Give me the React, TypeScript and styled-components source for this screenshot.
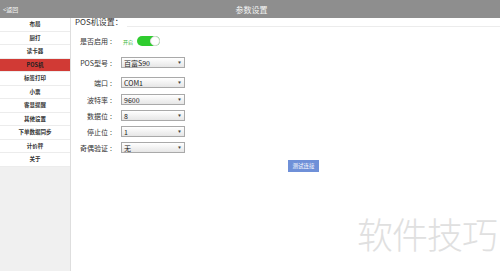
import styled, { createGlobalStyle } from 'styled-components';

const GlobalStyle = createGlobalStyle`
  html, body {
    margin: 0;
    padding: 0;
    background: #fff;
  }
  body {
    font-family: "Noto Sans CJK SC", "Liberation Sans", sans-serif;
  }
`;

const Page = styled.div`
  width: 500px;
  height: 271px;
  display: flex;
  flex-direction: column;
  position: relative;
  overflow: hidden;
`;

const TopBar = styled.div`
  height: 18px;
  flex: 0 0 18px;
  background: #8e8e8e;
  display: flex;
  align-items: center;
  color: #f4f4f4;
`;

const BackLink = styled.span`
  font-size: 6px;
  padding-left: 3px;
  width: 40px;
`;

const Title = styled.span`
  flex: 1;
  text-align: center;
  font-size: 8px;
  padding-right: 60px;
  padding-left: 20px;
`;

const Body = styled.div`
  flex: 1;
  display: flex;
`;

const Sidebar = styled.div`
  width: 70px;
  background: #f0f0f0;
  border-right: 1px solid #dedede;
  display: flex;
  flex-direction: column;
`;

const MenuItem = styled.div<{ $active?: boolean }>`
  height: 13.5px;
  display: flex;
  align-items: center;
  justify-content: center;
  font-size: 5.5px;
  font-weight: 700;
  color: ${p => (p.$active ? '#222' : '#333')};
  background: ${p => (p.$active ? '#d13a35' : '#fff')};
  border-bottom: 1px solid #ececec;
  box-sizing: border-box;
`;

const Content = styled.div`
  flex: 1;
  padding-left: 4px;
  display: flex;
  flex-direction: column;
`;

const SectionHead = styled.div`
  display: flex;
  align-items: flex-end;
  height: 8px;
  font-size: 8px;
  line-height: 8px;
  color: #333;
`;

const HeadLine = styled.div`
  flex: 1;
  border-bottom: 1px solid #ececec;
  margin-left: 4px;
  margin-bottom: -1px;
`;

const Row = styled.div<{ $mt: number; $h?: number }>`
  display: flex;
  align-items: center;
  height: ${p => p.$h ?? 11}px;
  margin-top: ${p => p.$mt}px;
`;

const Label = styled.div`
  width: 41px;
  display: flex;
  justify-content: flex-end;
  font-size: 7px;
  color: #333;
  white-space: nowrap;
`;

const Colon = styled.span`
  margin-left: 2px;
  width: 6px;
`;

const Select = styled.div`
  margin-left: 5px;
  width: 64px;
  height: 11px;
  box-sizing: border-box;
  border: 1px solid #a9a9a9;
  background: linear-gradient(#ffffff, #e6e6e6);
  display: flex;
  align-items: center;
  justify-content: space-between;
  padding: 0 3px 0 2px;
  font-size: 7px;
  color: #222;
`;

const Arrow = styled.span`
  font-size: 3px;
  color: #444;
`;

const OnText = styled.span`
  margin-left: 7px;
  font-size: 5px;
  color: #3cb83c;
`;

const Toggle = styled.div`
  margin-left: 4px;
  width: 23px;
  height: 10px;
  border-radius: 5px;
  background: #2fcc2f;
  position: relative;
`;

const Knob = styled.div`
  position: absolute;
  right: 0;
  top: 0;
  width: 10px;
  height: 10px;
  border-radius: 50%;
  background: #fff;
  box-sizing: border-box;
  border: 1px solid #dcdcdc;
`;

const TestButton = styled.div`
  margin-left: 213px;
  margin-top: 7px;
  width: 31px;
  height: 12px;
  background: #6f90d8;
  color: #fff;
  font-size: 5.5px;
  display: flex;
  align-items: center;
  justify-content: center;
`;

const Watermark = styled.div`
  position: absolute;
  right: 3px;
  bottom: 12px;
  font-size: 36px;
  letter-spacing: -1px;
  color: #e0e0e0;
  font-family: "Noto Sans CJK SC", sans-serif;
  font-weight: 300;
`;

const menu = ['布局', '厨打', '读卡器', 'POS机', '标签打印', '小票', '客显提醒', '其他设置', '下单数据同步', '计价秤', '关于'];

const fields = [
  { label: '端口', value: 'COM1', mt: 9 },
  { label: '波特率', value: '9600', mt: 6 },
  { label: '数据位', value: '8', mt: 5 },
  { label: '停止位', value: '1', mt: 5 },
  { label: '奇偶验证', value: '无', mt: 5 },
];

export default function App() {
  return (
    <Page>
      <GlobalStyle />
      <TopBar>
        <BackLink>&lt;返回</BackLink>
        <Title>参数设置</Title>
      </TopBar>
      <Body>
        <Sidebar>
          {menu.map(m => (
            <MenuItem key={m} $active={m === 'POS机'}>{m}</MenuItem>
          ))}
        </Sidebar>
        <Content>
          <SectionHead>
            POS机设置：
            <HeadLine />
          </SectionHead>
          <Row $mt={9} $h={12}>
            <Label>是否启用<Colon>:</Colon></Label>
            <OnText>开启</OnText>
            <Toggle>
              <Knob />
            </Toggle>
          </Row>
          <Row $mt={10}>
            <Label>POS型号<Colon>:</Colon></Label>
            <Select>
              百富S90
              <Arrow>▼</Arrow>
            </Select>
          </Row>
          {fields.map(f => (
            <Row key={f.label} $mt={f.mt}>
              <Label>{f.label}<Colon>:</Colon></Label>
              <Select>
                {f.value}
                <Arrow>▼</Arrow>
              </Select>
            </Row>
          ))}
          <TestButton>测试连接</TestButton>
        </Content>
      </Body>
      <Watermark>软件技巧</Watermark>
    </Page>
  );
}
